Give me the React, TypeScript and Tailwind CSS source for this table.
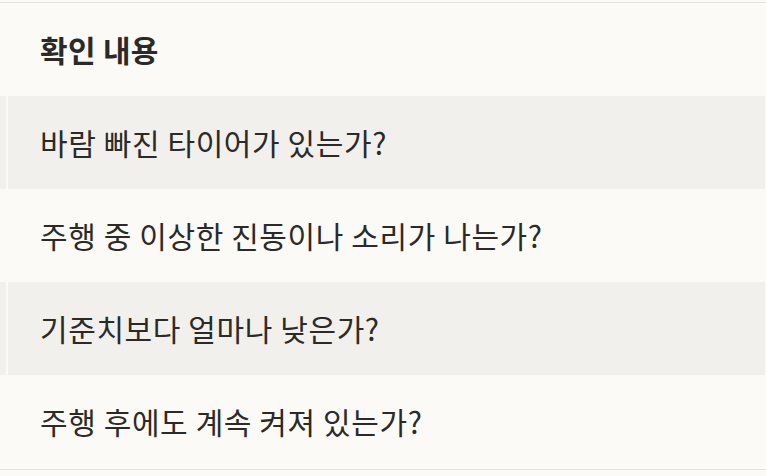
import React from "react";

const rows = [
  { text: "바람 빠진 타이어가 있는가?", grey: true },
  { text: "주행 중 이상한 진동이나 소리가 나는가?", grey: false },
  { text: "기준치보다 얼마나 낮은가?", grey: true },
  { text: "주행 후에도 계속 켜져 있는가?", grey: false },
];

export default function App() {
  return (
    <div
      className="w-full h-[476px] bg-[#fbfaf7] pt-[2px] text-[#2b2a26]"
      style={{ fontFamily: '"Noto Sans CJK KR", "Noto Sans", sans-serif' }}
    >
      <div className="border-t border-b border-[#e6e3de]">
        <div className="h-[93px] flex items-center pl-10 text-[30px] font-bold tracking-[0.3px]">확인 내용</div>
        {rows.map((r, i) => (
          <div key={i} className={`h-[93px] flex ${i === 3 ? "mb-[1px]" : ""}`}>
            <div className={`w-[6px] ${r.grey ? "bg-[#f1f0ec]" : ""}`} />
            <div className="w-[2px]" />
            <div
              className={`flex-1 mr-[1px] flex items-center pl-8 text-[30px] tracking-[0.6px] ${
                r.grey ? "bg-[#f1f0ec]" : ""
              }`}
            >
              {r.text}
            </div>
          </div>
        ))}
      </div>
    </div>
  );
}
